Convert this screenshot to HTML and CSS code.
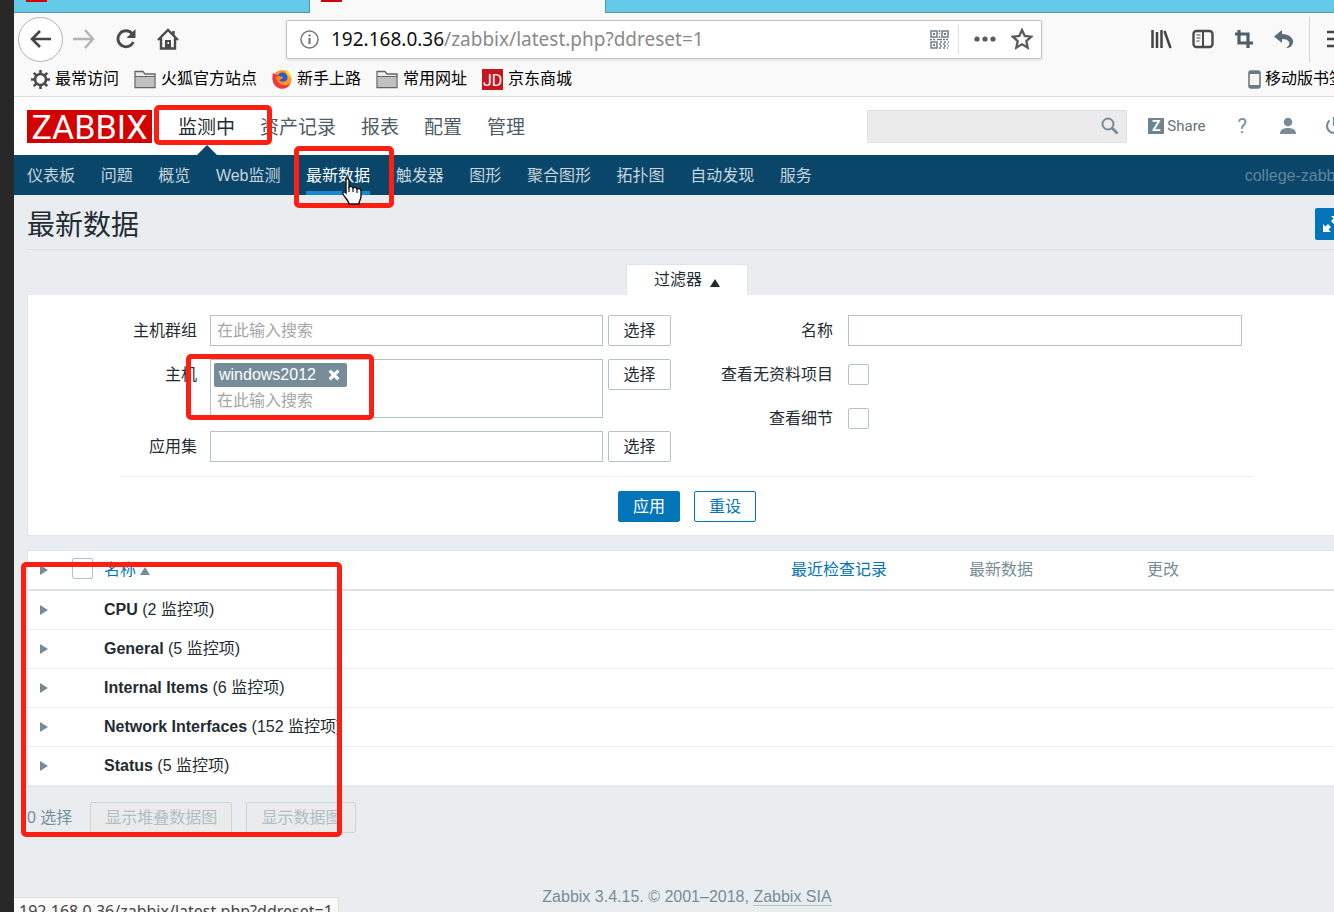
FILE: index.html
```html
<!DOCTYPE html>
<html lang="zh-CN">
<head>
<meta charset="utf-8">
<title>最新数据</title>
<link rel="stylesheet" href="styles.css">
</head>
<body>
<div class="desktop">
<div class="browser">
  <div class="tabstrip">
    <div class="tab"><span class="favicon"></span></div>
    <div class="tab tab-active"><span class="favicon"></span></div>
  </div>
  <div class="toolbar">
    <button class="icon-btn back" aria-label="后退"><svg width="22" height="20" viewBox="0 0 22 20"><path d="M10 2 2 10l8 8M2 10h19" fill="none" stroke="#444" stroke-width="2.6"/></svg></button>
    <button class="icon-btn forward" aria-label="前进"><svg width="22" height="20" viewBox="0 0 22 20"><path d="M12 1l8 9-8 9M20 10H0" fill="none" stroke="#b4b4b4" stroke-width="2.4"/></svg></button>
    <button class="icon-btn" aria-label="刷新"><svg width="22" height="22" viewBox="0 0 22 22"><path d="M17 5.5A8 8 0 1 0 18.300 14" fill="none" stroke="#4a4a4a" stroke-width="2.8"/><path d="M20.500 1v9h-9z" fill="#4a4a4a"/></svg></button>
    <button class="icon-btn" aria-label="主页"><svg width="22" height="22" viewBox="0 0 22 22"><path d="M1 12 11 2l10 10M4 10v10.500h14V10M16.500 3v4" fill="none" stroke="#4a4a4a" stroke-width="2.4"/><path d="M8 12h6v8H8z" fill="#4a4a4a"/><path d="M10.500 14h1.500v2h-1.500z" fill="#fff"/></svg></button>
    <div class="urlbar">
      <svg width="19" height="19" viewBox="0 0 19 19"><circle cx="9.500" cy="9.500" r="8.500" fill="none" stroke="#777" stroke-width="1.500"/><path d="M9.500 8v6M9.500 4.500v2" stroke="#777" stroke-width="2.200"/></svg>
      <span class="url"><b>192.168.0.36</b>/zabbix/latest.php?ddreset=1</span>
      <svg width="19" height="19" viewBox="0 0 19 19"><g fill="none" stroke="#6f7d89" stroke-width="1.500"><path d="M1 1h6v6H1zM12 1h6v6h-6zM1 12h6v6H1z"/><path d="M9.500 0v4M9.500 6v4M0 9.500h5M7 9.500h12" stroke-dasharray="2 1"/><path d="M10 12h9M9 14h9M10 16h9M9 18h9" stroke-dasharray="2 2"/></g><path d="M3 3h2v2H3zM14 3h2v2h-2zM3 14h2v2H3z" fill="#6f7d89"/></svg>
      <span class="url-divider"></span>
      <svg class="dots" width="22" height="6" viewBox="0 0 22 6"><circle cx="3" cy="3" r="2.600" fill="#5b5b5b"/><circle cx="11" cy="3" r="2.600" fill="#5b5b5b"/><circle cx="19" cy="3" r="2.600" fill="#5b5b5b"/></svg>
      <svg width="22" height="22" viewBox="0 0 22 22"><path d="m11 2 2.700 6 6.500.7-4.900 4.400 1.400 6.500L11 16.300l-5.700 3.300 1.400-6.500L1.800 8.700 8.300 8z" fill="none" stroke="#5b5b5b" stroke-width="2.300"/></svg>
    </div>
    <button class="icon-btn library" aria-label="书库"><svg width="21" height="20" viewBox="0 0 21 20"><path d="M1.500 1v18M6 3v16M10.500 1v18M13.500 2l6 17" fill="none" stroke="#444" stroke-width="2.500"/></svg></button>
    <button class="icon-btn" aria-label="侧栏"><svg width="22" height="20" viewBox="0 0 22 20"><rect x="1.500" y="2" width="19" height="16" rx="3" fill="none" stroke="#4a4a4a" stroke-width="2.400"/><path d="M11 2v16" stroke="#4a4a4a" stroke-width="2"/><path d="M4.500 6h4M4.500 9h4M4.500 12h3" stroke="#4a4a4a"/></svg></button>
    <button class="icon-btn" aria-label="截图"><svg width="20" height="20" viewBox="0 0 20 20"><path d="M5 1v13h14M1 5h13v14" fill="none" stroke="#4f5d69" stroke-width="3.200"/></svg></button>
    <button class="icon-btn" aria-label="撤销"><svg width="20" height="20" viewBox="0 0 20 20"><path d="M0 7.500 8 1v4c7 0 12 4 11 9-1 3-3 5-7 5 3-2 4-4 3-6-1-2-3-3-7-3v4z" fill="#5c6b78"/></svg></button>
    <span class="bar-divider"></span>
    <button class="icon-btn" aria-label="菜单"><svg width="20" height="18" viewBox="0 0 20 18"><path d="M0 2h20M0 9h20M0 16h20" stroke="#444" stroke-width="2.500"/></svg></button>
  </div>
  <div class="bookmarks">
    <a href="#"><svg width="19" height="19" viewBox="0 0 19 19"><circle cx="9.500" cy="9.500" r="5.500" fill="none" stroke="#4a4a4a" stroke-width="2.600"/><path d="M9.500 0v4M9.500 15v4M0 9.500h4M15 9.500h4M2.800 2.800l3 3M13.200 13.200l3 3M2.800 16.200l3-3M13.200 5.800l3-3" stroke="#4a4a4a" stroke-width="2.600"/></svg>最常访问</a>
    <a href="#"><svg width="22" height="19" viewBox="0 0 22 19"><path d="M1 17.500V1.500h8l2 2.500h10v13.500z" fill="#ececec" stroke="#666" stroke-width="1.300"/><path d="M2 7h18v10H2z" fill="#c0c0c0"/><path d="M1 6.500h20" stroke="#666"/></svg>火狐官方站点</a>
    <a href="#"><svg width="20" height="20" viewBox="0 0 20 20"><circle cx="10" cy="10.500" r="9.500" fill="#ff9a1c"/><path d="M1 4c-2 7 1 15 9 15.500 4 0 7-2 8-5-4 3-10 2-12-2C5 10 5 8 7 6 4 6 3 5 1 4z" fill="#f5344a"/><path d="M14 0c4 3 6 7 5.500 11-1-3-3-5-5-6z" fill="#ffd93b"/><circle cx="10.500" cy="8.500" r="5" fill="#245bd0"/><path d="M4 8c3-2 5 0 7 0-1 3-3 2-4 3 2 2 5 2 7 0-2 5-9 4-10-3z" fill="#ff8b1a"/></svg>新手上路</a>
    <a href="#"><svg width="22" height="19" viewBox="0 0 22 19"><path d="M1 17.500V1.500h8l2 2.500h10v13.500z" fill="#ececec" stroke="#666" stroke-width="1.300"/><path d="M2 7h18v10H2z" fill="#c0c0c0"/><path d="M1 6.500h20" stroke="#666"/></svg>常用网址</a>
    <a href="#"><span class="jd">JD</span>京东商城</a>
    <a href="#" class="mobile"><svg width="13" height="19" viewBox="0 0 13 19"><rect x="1" y="1" width="11" height="17" rx="2" fill="#f4f4f4" stroke="#6c7984" stroke-width="1.600"/><path d="M1 1h11v3H1zM1 15h11v3H1z" fill="#6c7984"/></svg>移动版书签</a>
  </div>

  <header class="header">
    <a class="logo" href="#">ZABBIX</a>
    <nav class="main-nav">
      <a class="current" href="#">监测中</a><a href="#">资产记录</a><a href="#">报表</a><a href="#">配置</a><a href="#">管理</a>
    </nav>
    <div class="search">
      <input type="text" aria-label="搜索">
      <button class="icon-btn" aria-label="搜索"><svg width="18" height="18" viewBox="0 0 18 18"><circle cx="7" cy="7" r="5.500" fill="none" stroke="#768d99" stroke-width="2"/><path d="m11 11 5.500 5.500" stroke="#768d99" stroke-width="2.800"/></svg></button>
    </div>
    <a class="share" href="#"><span class="z">Z</span>Share</a>
    <a class="help" href="#">?</a>
    <a class="user" href="#" aria-label="用户"><svg width="18" height="18" viewBox="0 0 18 18"><circle cx="9" cy="5" r="4.300" fill="#768d99"/><path d="M1 17c0-4 3-6 8-6s8 2 8 6z" fill="#768d99"/></svg></a>
    <a class="power" href="#" aria-label="退出"><svg width="18" height="18" viewBox="0 0 18 18"><path d="M4.500 3.500a7 7 0 1 0 9 0M9 0v9" fill="none" stroke="#768d99" stroke-width="2.200"/></svg></a>
  </header>
  <div class="subbar">
    <nav class="sub-nav">
      <a href="#">仪表板</a><a href="#">问题</a><a href="#">概览</a><a href="#">Web监测</a><a class="current" href="#">最新数据</a><a href="#">触发器</a><a href="#">图形</a><a href="#">聚合图形</a><a href="#">拓扑图</a><a href="#">自动发现</a><a href="#">服务</a>
    </nav>
    <span class="server">college-zabbix</span>
  </div>

  <main class="content">
    <div class="title-row">
      <h1>最新数据</h1>
      <button class="fullscreen" aria-label="全屏"><svg width="22" height="22" viewBox="0 0 22 22"><path d="M3 19v-8l2.500 2.500L8 11l3 3-2.500 2.500L11 19zM19 3v8l-2.500-2.500L14 11l-3-3 2.500-2.500L11 3z" fill="#fff"/></svg></button>
    </div>
    <button class="filter-tab">过滤器 <span class="tri-up"></span></button>
    <form class="filter">
      <div class="filter-grid">
        <div class="filter-col">
          <div class="row"><label for="groups">主机群组</label><input id="groups" class="field" type="text" placeholder="在此输入搜索"><button type="button" class="btn">选择</button></div>
          <div class="row"><label for="hosts">主机</label>
            <div class="field multi"><span class="chip">windows2012<button type="button" class="icon-btn" aria-label="移除"><svg width="12" height="12" viewBox="0 0 11 11"><path d="m1.500 1.500 8 8M9.500 1.500l-8 8" stroke="#fff" stroke-width="3"/></svg></button></span><input id="hosts" type="text" placeholder="在此输入搜索"></div>
            <button type="button" class="btn">选择</button></div>
          <div class="row"><label for="apps">应用集</label><input id="apps" class="field" type="text"><button type="button" class="btn">选择</button></div>
        </div>
        <div class="filter-col right">
          <div class="row"><label for="name">名称</label><input id="name" class="field" type="text"></div>
          <div class="row"><label for="nodata">查看无资料项目</label><input id="nodata" class="check" type="checkbox"></div>
          <div class="row"><label for="details">查看细节</label><input id="details" class="check" type="checkbox"></div>
        </div>
      </div>
      <div class="filter-actions"><button type="button" class="btn primary">应用</button><button type="button" class="btn outline">重设</button></div>
    </form>

    <table class="data">
      <colgroup><col class="c-arrow"><col class="c-check"><col><col class="c-last"><col class="c-last"><col class="c-change"></colgroup>
      <thead><tr><th><span class="tri-right"></span></th><th><input class="check" type="checkbox" aria-label="全选"></th><th><a href="#">名称<span class="tri-up"></span></a></th><th><a href="#">最近检查记录</a></th><th>最新数据</th><th>更改</th></tr></thead>
      <tbody>
        <tr><td><span class="tri-right"></span></td><td></td><td colspan="4"><b>CPU</b> (2 监控项)</td></tr>
        <tr><td><span class="tri-right"></span></td><td></td><td colspan="4"><b>General</b> (5 监控项)</td></tr>
        <tr><td><span class="tri-right"></span></td><td></td><td colspan="4"><b>Internal Items</b> (6 监控项)</td></tr>
        <tr><td><span class="tri-right"></span></td><td></td><td colspan="4"><b>Network Interfaces</b> (152 监控项)</td></tr>
        <tr><td><span class="tri-right"></span></td><td></td><td colspan="4"><b>Status</b> (5 监控项)</td></tr>
      </tbody>
    </table>
    <div class="actions"><span>0 选择</span><button class="btn" disabled>显示堆叠数据图</button><button class="btn" disabled>显示数据图</button></div>
  </main>
  <footer class="footer">Zabbix 3.4.15. © 2001–2018, <a href="#">Zabbix SIA</a></footer>
</div>
<div class="status">192.168.0.36/zabbix/latest.php?ddreset=1</div>
<span class="mark mark-menu"></span>
<span class="mark mark-sub"></span>
<span class="mark mark-host"></span>
<span class="mark mark-list"></span>
<svg class="cursor" width="22" height="28" viewBox="0 0 22 28"><path d="M5 2c2-1 3 0 3 2v6c1-1 3-1 4 1 1-1 3-1 4 1 2-1 4 0 4 2v6c0 2-2 4-2 7H8c0-3-4-6-6-10-1-2 1-3 3-1z" fill="#fff" stroke="#111" stroke-width="1.400"/><path d="M8 10v5M12 11v4M16 12v4" stroke="#111" stroke-width="1.200"/></svg>
</div>
</body>
</html>
```
FILE: styles.css
```css
* { box-sizing: border-box; }
body { margin: 0; font: 16px/20px "Liberation Sans", "Noto Sans CJK SC", sans-serif; color: #1f2c33; }
a { color: inherit; text-decoration: none; }
button, input { font: inherit; color: inherit; }
svg { display: block; flex: none; }
.desktop { position: relative; height: 100vh; overflow: hidden; background: #282828; padding-left: 14px; }
.browser { display: flex; flex-direction: column; min-height: 100%; margin-right: -26px; background: #e9edf0; }
.icon-btn { display: flex; align-items: center; justify-content: center; border: 0; padding: 0; background: none; flex: none; }

.tabstrip { display: flex; height: 13px; background: #65c9ea; border-bottom: 1px solid #5596ab; }
.tab { width: 296px; height: 13px; padding-left: 12px; border-right: 1px solid #5596ab; }
.tab-active { background: #f9f9fa; padding-left: 11px; }
.favicon { display: block; width: 21px; height: 2px; background: #d40000; }

.toolbar { display: flex; align-items: center; height: 52px; padding: 0 13px 0 4px; background: #f9f9fa; }
.back { width: 45px; height: 45px; border: 1px solid #b5b5b5; border-radius: 50%; background: #fff; }
.forward { margin: 0 20px 0 10px; }
.toolbar .icon-btn + .icon-btn:not(.forward), .library { margin-right: 20px; }
.urlbar { display: flex; flex: 1; align-items: center; height: 39px; margin: 0 109px 0 87px; padding: 0 8px 0 13px; background: #fff; border: 1px solid #c2c2c2; border-radius: 2px; box-shadow: 0 1px 3px #ddd; }
.url { flex: 1; margin-left: 12px; color: #8a8a8a; font: 19px/26px "Noto Sans", sans-serif; white-space: nowrap; }
.url b { font-weight: 400; color: #111; }
.url-divider { width: 1px; height: 29px; margin: 0 15px 0 9px; background: #ddd; }
.dots { margin-right: 15px; }
.bar-divider { width: 1px; height: 45px; margin: 0 17px 0 -5px; background: #d4d4d4; }
.bookmarks { display: flex; align-items: center; gap: 15px; height: 32px; padding: 0 15px 3px 17px; background: #f9f9fa; border-bottom: 1px solid #dcdcdc; color: #000; }
.bookmarks a { display: flex; align-items: center; gap: 5px; white-space: nowrap; }
.bookmarks .mobile { margin-left: auto; gap: 4px; }
.jd { width: 21px; height: 21px; background: #c9151e; color: #fff; font: 16px/23px Roboto, sans-serif; text-align: center; }

.header { display: flex; align-items: center; height: 58px; padding: 0 17px 0 13px; background: #fff; color: #4e5c65; }
.logo { width: 125px; height: 33px; background: #d40000; color: #fff; font: 34px/34px Roboto, sans-serif; text-align: center; }
.main-nav { display: flex; gap: 25px; align-self: stretch; margin: 0 auto 0 26px; font-size: 19px; line-height: 61px; }
.main-nav .current { position: relative; color: #1f2c33; }
.main-nav .current::after { content: ""; position: absolute; left: 50%; bottom: 0; margin-left: -10px; border: 10px solid transparent; border-top: 0; border-bottom-color: #0a466a; }
.search { display: flex; align-items: center; width: 260px; height: 33px; padding-right: 7px; background: #ebebeb; border: 1px solid #e2e2e2; }
.search input { flex: 1; min-width: 0; border: 0; background: none; }
.share { display: flex; align-items: center; gap: 3px; margin-left: 21px; font: 15px/20px Roboto, sans-serif; color: #63747e; }
.z { width: 16px; height: 16px; background: #6d8491; color: #fff; font: bold 14px/17px Roboto, sans-serif; text-align: center; }
.help { margin: 0 32px; font: 20px/24px Roboto, sans-serif; color: #768d99; }
.power { margin-left: 28px; }

.subbar { display: flex; align-items: stretch; justify-content: space-between; height: 40px; padding: 0 0 0 13px; background: #0a466a; color: #c6d5dd; line-height: 41px; white-space: nowrap; }
.sub-nav { display: flex; justify-content: space-between; width: 785px; }
.sub-nav .current { color: #fff; border-bottom: 4px solid #1588d1; }
.server { color: #60849a; margin-right: 13px; }

.content { padding: 0 13px; }
.title-row { display: flex; align-items: center; justify-content: space-between; height: 55px; padding-top: 4px; border-bottom: 1px solid #dce1e4; }
h1 { margin: 0; padding-top: 4px; font-size: 28px; line-height: 40px; font-weight: 400; }
.fullscreen { display: flex; align-items: center; justify-content: center; width: 32px; height: 32px; border: 0; border-radius: 2px; padding: 0; background: #0275b8; }
.filter-tab { display: flex; align-items: center; justify-content: center; gap: 8px; width: 122px; height: 31px; margin: 14px auto 0; padding: 0; border: 1px solid #dfe4e7; border-bottom: 0; background: #fff; }
.tri-up { display: inline-block; border: 5px solid transparent; border-top: 0; border-bottom: 8px solid currentColor; }
.filter-tab .tri-up { margin-top: 6px; }
.filter { padding: 20px 92px 13px; background: #fff; border: 1px solid #dfe4e7; border-top: 0; }
.filter-grid { display: grid; grid-template-columns: 1fr 1fr; padding-bottom: 14px; border-bottom: 1px solid #e9edf0; }
.filter-col { display: flex; flex-direction: column; gap: 13px; }
.row { display: flex; align-items: flex-start; }
.row label { width: 77px; margin-right: 13px; text-align: right; line-height: 31px; white-space: nowrap; }
.right .row { align-items: center; height: 31px; }
.right .row label { width: 146px; margin-right: 15px; }
.field { flex: 1; min-width: 0; height: 31px; padding: 0 6px; border: 1px solid #b3c1c9; background: #fff; }
.right .field { margin-right: 12px; }
::placeholder { color: #a6a6a6; opacity: 1; }
.multi { height: 59px; padding: 3px; }
.multi input { display: block; width: 100%; height: 24px; padding: 0 3px; border: 0; background: none; margin-top: 2px; }
.chip { display: flex; align-items: center; gap: 12px; width: max-content; height: 24px; padding: 0 7px 0 5px; border-radius: 2px; background: #768d99; color: #fff; }
.btn { height: 31px; padding: 0 14px; border: 1px solid #b3c1c9; border-radius: 2px; background: #fff; white-space: nowrap; }
.row .btn { width: 63px; margin: 0 16px 0 5px; padding: 0; }
.check { appearance: none; display: block; width: 21px; height: 21px; margin: 0; border: 1px solid #b3c1c9; border-radius: 2px; background: #fff; }
.filter-actions { display: flex; justify-content: center; gap: 14px; padding-top: 14px; }
.primary { background: #0275b8; border-color: #0275b8; color: #fff; }
.outline { border-color: #0275b8; color: #0275b8; }

.data { width: 100%; margin-top: 14px; table-layout: fixed; border-collapse: separate; border-spacing: 0; background: #fff; border: 1px solid #dfe4e7; }
.c-arrow { width: 38px; } .c-check { width: 32px; } .c-last { width: 178px; } .c-change { width: 205px; }
.data th { height: 40px; padding: 0 6px; text-align: left; font-weight: 400; color: #768d99; border-bottom: 2px solid #dce2e6; }
.data th .check { margin-bottom: 3px; }
.data th a { color: #0275b8; }
.data th .tri-up { margin-left: 4px; color: #768d99; }
.data td { height: 39px; padding: 0 6px; border-bottom: 1px solid #e9edf0; }
.data tr > :first-child { padding-left: 12px; }
.tri-right { display: block; width: 0; border: 5px solid transparent; border-right: 0; border-left: 8px solid #768d99; }
.actions { display: flex; align-items: center; gap: 14px; padding-top: 15px; color: #768d99; }
.actions span { margin-right: 4px; }
.actions .btn { color: #b0bec5; background: #ebebeb; border-color: #ccd5d9; }
.footer { margin-top: auto; padding-bottom: 5px; text-align: center; color: #768d99; }
.footer a { border-bottom: 1px solid #b5c3ca; }

.status { position: absolute; left: 14px; bottom: -14px; height: 29px; padding: 0 5px; background: #f9f9fa; border: 1px solid #ddd; border-left: 0; color: #444; font: 16px/26px "Noto Sans", sans-serif; }
.mark { position: absolute; border: 5px solid #ff1f12; border-radius: 5px; pointer-events: none; }
.mark-menu { left: 154px; top: 105px; width: 118px; height: 40px; }
.mark-sub { left: 294px; top: 146px; width: 100px; height: 62px; }
.mark-host { left: 186px; top: 354px; width: 188px; height: 66px; }
.mark-list { left: 21px; top: 562px; width: 321px; height: 275px; }
.cursor { position: absolute; left: 341px; top: 177px; }
```
